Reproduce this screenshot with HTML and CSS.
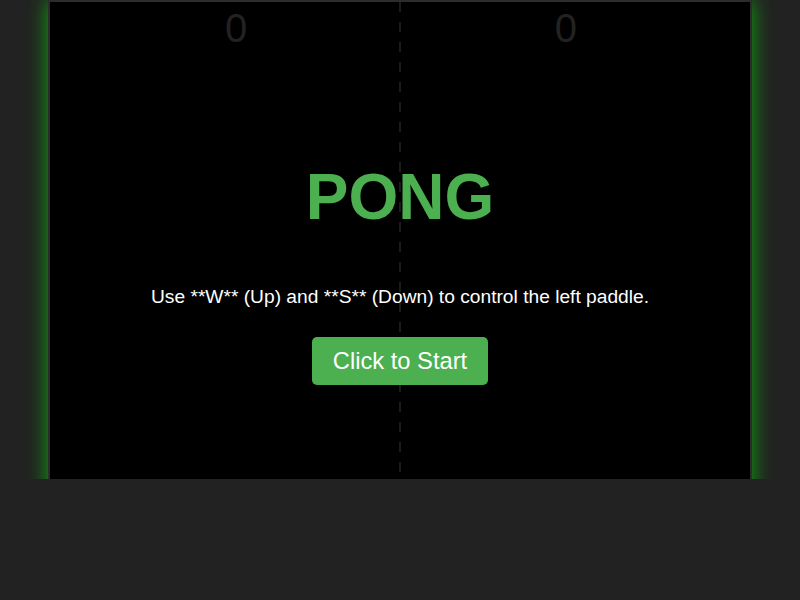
FILE: index.html
```html
<!DOCTYPE html>
<html lang="en">
<head>
<meta charset="utf-8">
<title>Pong</title>
<link rel="stylesheet" href="styles.css">
</head>
<body>
<div class="stage">
  <div class="game">
    <div class="scores">
      <span class="score">0</span>
      <span class="score">0</span>
    </div>
    <div class="overlay">
      <h1 class="title">PONG</h1>
      <p class="help">Use **W** (Up) and **S** (Down) to control the left paddle.</p>
      <button class="start" type="button">Click to Start</button>
    </div>
  </div>
</div>
</body>
</html>
```

FILE: styles.css
```css
html, body {
  margin: 0;
  padding: 0;
}
body {
  background: #222222;
  font-family: "Liberation Sans", Arial, sans-serif;
  width: 800px;
  height: 600px;
  overflow: hidden;
}
.stage {
  height: 479px;
  overflow: hidden;
  display: flex;
  justify-content: center;
}
.game {
  position: relative;
  width: 700px;
  height: 520px;
  flex: none;
  border: 2px solid #2c2c2c;
  box-shadow: 0 0 20px rgba(0, 255, 0, 0.6);
  background:
    repeating-linear-gradient(to bottom, #1b1b1b 0 10px, transparent 10px 20px) center top / 2px 100% no-repeat,
    #000000;
}
.scores {
  display: flex;
  justify-content: space-between;
  padding: 6px 173px 0 175px;
}
.score {
  font-size: 40px;
  line-height: 40px;
  color: #222222;
}
.overlay {
  position: absolute;
  inset: 0;
  display: flex;
  flex-direction: column;
  align-items: center;
  padding-top: 163px;
  color: #ffffff;
}
.title {
  margin: 0;
  font-size: 64px;
  line-height: 64px;
  font-weight: bold;
  color: #4caf50;
}
.help {
  margin: 56.5px 0 0;
  font-size: 19.2px;
  line-height: 22px;
}
.start {
  margin-top: 29px;
  padding: 11px 21px;
  font-family: "Liberation Sans", Arial, sans-serif;
  font-size: 23.7px;
  line-height: 26px;
  color: #ffffff;
  background: #4caf50;
  border: none;
  border-radius: 5px;
  cursor: pointer;
}
```
